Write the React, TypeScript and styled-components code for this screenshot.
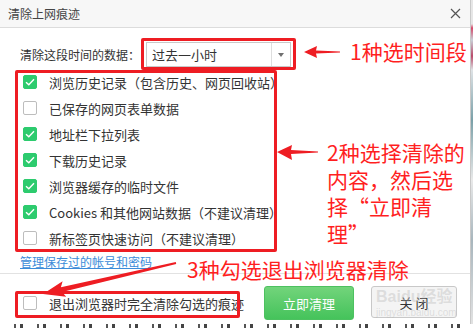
import styled, { createGlobalStyle } from 'styled-components';

const GlobalStyle = createGlobalStyle`
	html, body {
		margin: 0;
		padding: 0;
		background: #fff;
	}
	body {
		font-family: 'Microsoft YaHei', 'Noto Sans CJK SC', 'Noto Sans', sans-serif;
	}
`;

const Page = styled.div`
	position: relative;
	width: 473px;
	height: 328px;
	overflow: hidden;
	background: #fff;
	display: flex;
	flex-direction: column;
`;

const TopArea = styled.div`
	display: flex;
	height: 324px;
`;

const Dialog = styled.div`
	width: 471px;
	height: 324px;
	box-sizing: border-box;
	border-right: 1px solid #c9c9c9;
	display: flex;
	flex-direction: column;
	overflow: hidden;
	background: #fff;
`;

const EdgeStrip = styled.div`
	flex: 1;
	background: linear-gradient(
		180deg,
		#e6e6e6 0,
		#e6e6e6 24px,
		#d5486a 28px,
		#c9d0d8 40px,
		#b94a6a 56px,
		#dfe3e6 70px,
		#7aa0a8 120px,
		#e9e9e9 180px,
		#a8b6bd 240px,
		#e2e2e2 324px
	);
`;

const BottomStrip = styled.div`
	height: 4px;
	background: repeating-linear-gradient(
		90deg,
		#fff 0,
		#fff 14px,
		#555 14px,
		#555 16px,
		#fff 16px,
		#fff 20px,
		#444 20px,
		#444 23px
	);
`;

const TitleBar = styled.div`
	height: 28px;
	box-sizing: border-box;
	background: #f7f7f7;
	border-bottom: 1px solid #dcdcdc;
	display: flex;
	align-items: center;
	justify-content: space-between;
	padding: 0 9px 0 8px;
`;

const Title = styled.span`
	font-size: 12px;
	color: #444;
`;

const CloseIcon = styled.svg`
	width: 11px;
	height: 11px;
`;

const Body = styled.div`
	padding: 14px 0 0 20px;
`;

const TimeRow = styled.div`
	display: flex;
	align-items: center;
	gap: 6px;
	height: 25px;
`;

const Label = styled.span`
	font-size: 12px;
	color: #333;
	width: 120px;
`;

const Select = styled.div`
	width: 145px;
	height: 25px;
	box-sizing: border-box;
	border: 1px solid #c9c9c9;
	display: flex;
	background: #fff;
`;

const SelectValue = styled.span`
	flex: 1;
	font-size: 13px;
	color: #333;
	padding-left: 5px;
	line-height: 23px;
`;

const SelectArrow = styled.span`
	width: 18px;
	border-left: 1px solid #dedede;
	display: flex;
	align-items: center;
	justify-content: center;
	&::after {
		content: '';
		border-left: 3.5px solid transparent;
		border-right: 3.5px solid transparent;
		border-top: 4px solid #707070;
	}
`;

const List = styled.div`
	margin: 2px 0 0 3px;
`;

const Row = styled.label`
	display: flex;
	align-items: center;
	gap: 12px;
	height: 26px;
	font-size: 13px;
	color: #333;
	white-space: nowrap;
`;

const Box = styled.span<{ $checked?: boolean }>`
	width: 14px;
	height: 14px;
	box-sizing: border-box;
	border-radius: 2px;
	display: inline-flex;
	align-items: center;
	justify-content: center;
	flex-shrink: 0;
	background: ${(p) => (p.$checked ? '#2dcb6e' : '#fff')};
	border: 1px solid ${(p) => (p.$checked ? '#2dcb6e' : '#bdbdbd')};
`;

const ManageLink = styled.a`
	display: block;
	font-size: 12px;
	line-height: 22px;
	color: #3b8cd9;
	text-decoration: underline;
	cursor: pointer;
`;

const Footer = styled.div`
	flex: 1;
	border-top: 1px solid #e2e2e2;
	display: flex;
	align-items: flex-start;
	padding: 12px 13px 0 23px;
`;

const FooterCheck = styled(Row)`
	height: 34px;
`;

const Buttons = styled.div`
	margin-left: auto;
	display: flex;
	gap: 17px;
`;

const Button = styled.button<{ $primary?: boolean }>`
	height: ${(p) => (p.$primary ? '34px' : '32px')};
	width: ${(p) => (p.$primary ? '90px' : '86px')};
	border-radius: 3px;
	font-family: inherit;
	font-size: 13px;
	padding: 0;
	color: ${(p) => (p.$primary ? '#fff' : '#333')};
	background: ${(p) => (p.$primary ? 'linear-gradient(180deg, #72d47b 0%, #45c35b 100%)' : '#f4f4f4')};
	border: 1px solid ${(p) => (p.$primary ? '#4dc160' : '#c8c8c8')};
`;

const Watermark = styled.div`
	position: absolute;
	left: 376px;
	top: 289px;
	color: rgba(185, 185, 185, 0.4);
	font-family: 'Liberation Sans', 'Noto Sans CJK SC', sans-serif;
	line-height: 1;
	white-space: nowrap;
	pointer-events: none;
`;

const WatermarkBig = styled.div`
	font-size: 16px;
	font-weight: bold;
`;

const WatermarkSmall = styled.div`
	font-size: 10px;
	margin-top: 3px;
`;

const RedBox = styled.div<{ $l: number; $t: number; $w: number; $h: number }>`
	position: absolute;
	left: ${(p) => p.$l}px;
	top: ${(p) => p.$t}px;
	width: ${(p) => p.$w}px;
	height: ${(p) => p.$h}px;
	box-sizing: border-box;
	border: 3px solid #ee1d23;
	border-radius: 2px;
	pointer-events: none;
`;

const Note = styled.div<{ $l: number; $t: number }>`
	position: absolute;
	left: ${(p) => p.$l}px;
	top: ${(p) => p.$t}px;
	font-family: 'Noto Sans CJK SC', sans-serif;
	font-size: 21px;
	line-height: 27px;
	color: #ff1f1f;
	white-space: nowrap;
	pointer-events: none;
`;

const Arrows = styled.svg`
	position: absolute;
	left: 0;
	top: 0;
	width: 473px;
	height: 328px;
	pointer-events: none;
`;

const Check = () => (
	<svg width='10' height='8' viewBox='0 0 10 8'>
		<path d='M1 4.2 L3.8 6.8 L9 1.2' fill='none' stroke='#fff' strokeWidth='1.4' />
	</svg>
);

const items = [
	{ text: '浏览历史记录（包含历史、网页回收站）', checked: true },
	{ text: '已保存的网页表单数据', checked: false },
	{ text: '地址栏下拉列表', checked: true },
	{ text: '下载历史记录', checked: true },
	{ text: '浏览器缓存的临时文件', checked: true },
	{ text: 'Cookies 和其他网站数据（不建议清理）', checked: true },
	{ text: '新标签页快速访问（不建议清理）', checked: false },
];

export default function App() {
	return (
		<Page>
			<GlobalStyle />
			<TopArea>
				<Dialog>
					<TitleBar>
						<Title>清除上网痕迹</Title>
						<CloseIcon viewBox='0 0 11 11'>
							<path d='M1 1 L10 10 M10 1 L1 10' stroke='#555' strokeWidth='1.2' />
						</CloseIcon>
					</TitleBar>
					<Body>
						<TimeRow>
							<Label>清除这段时间的数据：</Label>
							<Select>
								<SelectValue>过去一小时</SelectValue>
								<SelectArrow />
							</Select>
						</TimeRow>
						<List>
							{items.map((item, index) => (
								<Row key={index}>
									<Box $checked={item.checked}>{item.checked && <Check />}</Box>
									{item.text}
								</Row>
							))}
						</List>
						<ManageLink>管理保存过的帐号和密码</ManageLink>
					</Body>
					<Footer>
						<FooterCheck>
							<Box />
							退出浏览器时完全清除勾选的痕迹
						</FooterCheck>
						<Buttons>
							<Button $primary>立即清理</Button>
							<Button>关 闭</Button>
						</Buttons>
					</Footer>
				</Dialog>
				<EdgeStrip />
			</TopArea>
			<BottomStrip />

			<Watermark>
				<WatermarkBig>Baidu经验</WatermarkBig>
				<WatermarkSmall>jingyan.baidu.com</WatermarkSmall>
			</Watermark>

			<RedBox $l={141} $t={38} $w={155} $h={32} />
			<RedBox $l={15} $t={70} $w={262} $h={182} />
			<RedBox $l={15} $t={291} $w={225} $h={27} />

			<Arrows viewBox='0 0 473 328'>
				<polygon
					fill='#ee1d23'
					points='304,52 317,46 316,50.5 340,51.4 340,52.6 316,53.5 317,58'
				/>
				<polygon
					fill='#ee1d23'
					points='277,152 292,145 291,150 318,151.4 318,152.6 291,154 292,160'
				/>
				<polygon
					fill='#ee1d23'
					points='43,294 62.6,281.2 60.9,287.3 175.8,262 176.2,264 62.1,292.1 66.2,296.8'
				/>
			</Arrows>

			<Note $l={350} $t={38}>1种选时间段</Note>
			<Note $l={327} $t={139}>
				2种选择清除的
				<br />
				内容，然后选
				<br />
				择“立即清
				<br />
				理”
			</Note>
			<Note $l={187} $t={256}>3种勾选退出浏览器清除</Note>
		</Page>
	);
}
